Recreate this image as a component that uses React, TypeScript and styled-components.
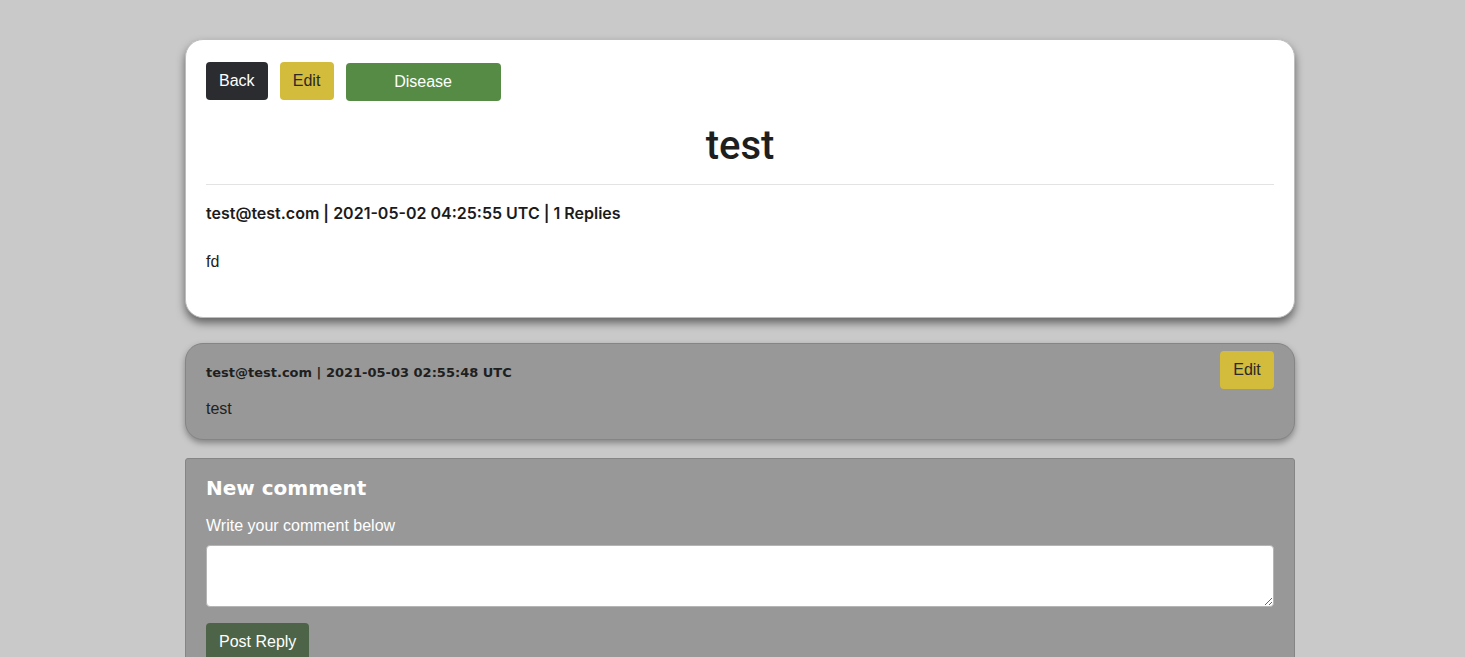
import React from "react";
import styled, { createGlobalStyle } from "styled-components";

const Global = createGlobalStyle`
  html, body { margin: 0; padding: 0; }
  body {
    background: #c9c9c9;
    font-family: "Liberation Sans", Arial, sans-serif;
    color: #212529;
    height: 657px;
    overflow: hidden;
  }
`;

const Page = styled.div`
  padding: 39px 170px 0 185px;
  display: flex;
  flex-direction: column;
`;

const PostCard = styled.div`
  background: #fff;
  border: 1px solid #bdbdbd;
  border-radius: 18px;
  box-shadow: 0 5px 9px rgba(0, 0, 0, 0.5);
  padding: 22px 20px 45px 20px;
  display: flex;
  flex-direction: column;
`;

const ButtonRow = styled.div`
  display: flex;
  align-items: flex-start;
  gap: 12px;
`;

const Button = styled.button<{ $bg: string; $fg: string; $w?: number; $mt?: number }>`
  background: ${(p) => p.$bg};
  color: ${(p) => p.$fg};
  border: none;
  border-radius: 4px;
  height: 38px;
  padding: 0 13px;
  ${(p) => (p.$w ? `width: ${p.$w}px;` : "")}
  margin-top: ${(p) => p.$mt ?? 0}px;
  font-family: "Liberation Sans", Arial, sans-serif;
  font-size: 16px;
  line-height: 38px;
  cursor: pointer;
`;

const Title = styled.h1`
  margin: 21px 0 0 0;
  text-align: center;
  font-family: Roboto, "Liberation Sans", Arial, sans-serif;
  font-size: 40px;
  font-weight: 500;
  line-height: 48px;
  color: #1e1e1e;
`;

const Rule = styled.hr`
  border: none;
  border-top: 1px solid #e3e3e3;
  margin: 14px 0 0 0;
`;

const PostMeta = styled.div`
  margin-top: 19px;
  font-family: Inter, "Liberation Sans", Arial, sans-serif;
  font-size: 16px;
  font-weight: 600;
  line-height: 18px;
  color: #1b1b1b;
`;

const Body = styled.p<{ $mt: number }>`
  margin: ${(p) => p.$mt}px 0 0 0;
  font-size: 16px;
  line-height: 20px;
  color: #222;
`;

const ReplyCard = styled.div`
  margin-top: 25px;
  background: #989898;
  border: 1px solid #858585;
  border-radius: 18px;
  box-shadow: 0 3px 6px rgba(0, 0, 0, 0.35);
  padding: 7px 20px 20px 20px;
  display: flex;
  flex-direction: column;
`;

const ReplyHeader = styled.div`
  display: flex;
  justify-content: space-between;
  align-items: flex-start;
`;

const ReplyMeta = styled.div`
  margin-top: 14px;
  font-family: "DejaVu Sans", Verdana, sans-serif;
  font-size: 13px;
  font-weight: bold;
  line-height: 16px;
  color: #1f1f1f;
`;

const FormCard = styled.div`
  margin-top: 18px;
  background: #989898;
  border: 1px solid #858585;
  border-radius: 3px;
  padding: 17px 20px 20px 20px;
  display: flex;
  flex-direction: column;
  height: 260px;
  box-sizing: border-box;
`;

const FormTitle = styled.h3`
  margin: 0;
  font-family: "DejaVu Sans", Verdana, sans-serif;
  font-size: 20px;
  font-weight: bold;
  line-height: 24px;
  color: #fff;
`;

const Label = styled.label`
  margin-top: 16px;
  font-size: 16px;
  line-height: 20px;
  color: #fff;
`;

const TextArea = styled.textarea`
  margin-top: 9px;
  height: 62px;
  box-sizing: border-box;
  border: 1px solid #b5b5b5;
  border-radius: 4px;
  background: #fff;
  font-family: "Liberation Sans", Arial, sans-serif;
  font-size: 16px;
  resize: vertical;
`;

const FormActions = styled.div`
  margin-top: 16px;
  display: flex;
`;

export default function App() {
  return (
    <>
      <Global />
      <Page>
        <PostCard>
          <ButtonRow>
            <Button $bg="#2a2c30" $fg="#fff">Back</Button>
            <Button $bg="#d3bb3c" $fg="#2a2a2a" $w={54}>Edit</Button>
            <Button $bg="#568b45" $fg="#fff" $w={155} $mt={1}>Disease</Button>
          </ButtonRow>
          <Title>test</Title>
          <Rule />
          <PostMeta>test@test.com | 2021-05-02 04:25:55 UTC | 1 Replies</PostMeta>
          <Body $mt={30}>fd</Body>
        </PostCard>

        <ReplyCard>
          <ReplyHeader>
            <ReplyMeta>test@test.com | 2021-05-03 02:55:48 UTC</ReplyMeta>
            <Button $bg="#d3bb3c" $fg="#2a2a2a" $w={54}>Edit</Button>
          </ReplyHeader>
          <Body $mt={10}>test</Body>
        </ReplyCard>

        <FormCard>
          <FormTitle>New comment</FormTitle>
          <Label>Write your comment below</Label>
          <TextArea />
          <FormActions>
            <Button $bg="#4e6448" $fg="#fff">Post Reply</Button>
          </FormActions>
        </FormCard>
      </Page>
    </>
  );
}
